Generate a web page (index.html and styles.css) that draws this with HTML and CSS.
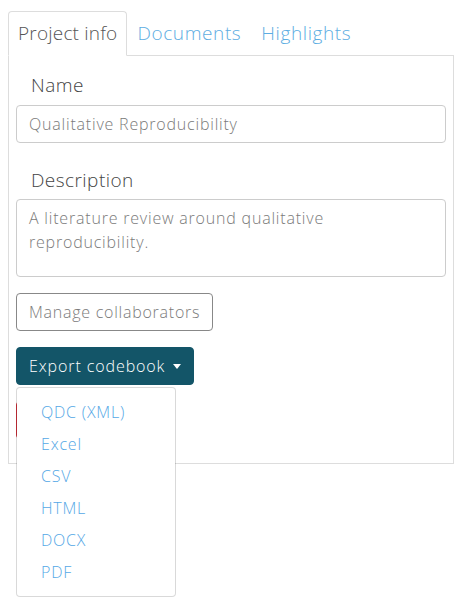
FILE: index.html
```html
<!DOCTYPE html>
<html>
<head>
<meta charset="utf-8">
<link rel="stylesheet" href="styles.css">
</head>
<body>
<div class="page">
  <ul class="tabs">
    <li class="tab active">Project info</li>
    <li class="tab">Documents</li>
    <li class="tab">Highlights</li>
  </ul>
  <div class="panel">
    <label class="label">Name</label>
    <div class="input">Qualitative Reproducibility</div>
    <label class="label label-gap">Description</label>
    <div class="input textarea">A literature review around qualitative reproducibility.</div>
    <div class="row"><button class="btn btn-outline">Manage collaborators</button></div>
    <div class="row dropdown">
      <button class="btn btn-primary">Export codebook <span class="caret"></span></button>
      <ul class="menu">
        <li>QDC (XML)</li>
        <li>Excel</li>
        <li>CSV</li>
        <li>HTML</li>
        <li>DOCX</li>
        <li>PDF</li>
      </ul>
    </div>
    <div class="row"><button class="btn btn-danger" aria-label="Delete project"></button></div>
  </div>
</div>
</body>
</html>
```
FILE: styles.css
```css
* { box-sizing: border-box; }
html, body { overflow: visible; }
body {
  margin: 11px 8px 8px;
  font-family: "Open Sans", "DejaVu Sans", sans-serif;
  font-weight: 300;
  color: #444;
  background: #fff;
  min-height: 590px;
}
.page { min-height: 590px; }
.tabs {
  list-style: none;
  margin: 0;
  padding: 0;
  display: flex;
  border-bottom: 1px solid #ddd;
  height: 45px;
}
.tab {
  padding: 0 9px;
  font-size: 19px;
  line-height: 43px;
  color: #5dade2;
  border: 1px solid transparent;
  border-radius: 4px 4px 0 0;
  letter-spacing: 0.6px;
}
.tab.active {
  color: #555;
  border-color: #ddd;
  border-bottom-color: #fff;
  background: #fff;
  height: 45px;
  letter-spacing: 0.2px;
}
.panel {
  border: 1px solid #ddd;
  border-top: none;
  padding: 16px 7px 24px;
  overflow: visible;
}
.label {
  display: block;
  padding-left: 15px;
  font-size: 19px;
  line-height: 26px;
  color: #444;
  margin-bottom: 7px;
  letter-spacing: 0.45px;
}
.label-gap { margin-top: 24px; margin-bottom: 6px; }
.input {
  height: 38px;
  border: 1px solid #ccc;
  border-radius: 4px;
  padding: 0 12px;
  font-size: 16px;
  line-height: 36px;
  color: #7a7a7a;
  letter-spacing: 0.8px;
}
.textarea {
  height: 78px;
  line-height: 24px;
  padding: 6px 40px 0 12px;
}
.row { margin-top: 16px; display: flex; align-items: flex-start; }
.btn {
  font-family: inherit;
  font-weight: 300;
  font-size: 16px;
  height: 38px;
  padding: 0 12px;
  border-radius: 4px;
  letter-spacing: 0.75px;
  display: inline-flex;
  align-items: center;
}
.btn-outline {
  background: #fff;
  border: 1px solid #888;
  color: #7a7a7a;
}
.btn-primary {
  background: #135568;
  border: 1px solid #135568;
  color: #fff;
  letter-spacing: 0.9px;
}
.caret {
  display: inline-block;
  width: 0; height: 0;
  margin-left: 8px;
  border-left: 4px solid transparent;
  border-right: 4px solid transparent;
  border-top: 5px solid #fff;
}
.btn-danger {
  background: #d42f3a;
  border: 1px solid #d42f3a;
  width: 130px;
}
.dropdown { position: relative; z-index: 5; }
.menu {
  position: absolute;
  z-index: 10;
  left: 0;
  top: 40px;
  width: 160px;
  margin: 0;
  padding: 8px 0;
  list-style: none;
  background: #fff;
  background-clip: padding-box;
  border: 1px solid rgba(0,0,0,0.15);
  border-radius: 4px;
}
.menu li {
  height: 32px;
  line-height: 32px;
  padding-left: 24px;
  font-size: 16px;
  color: #55a8e6;
  letter-spacing: 0.8px;
}
```
